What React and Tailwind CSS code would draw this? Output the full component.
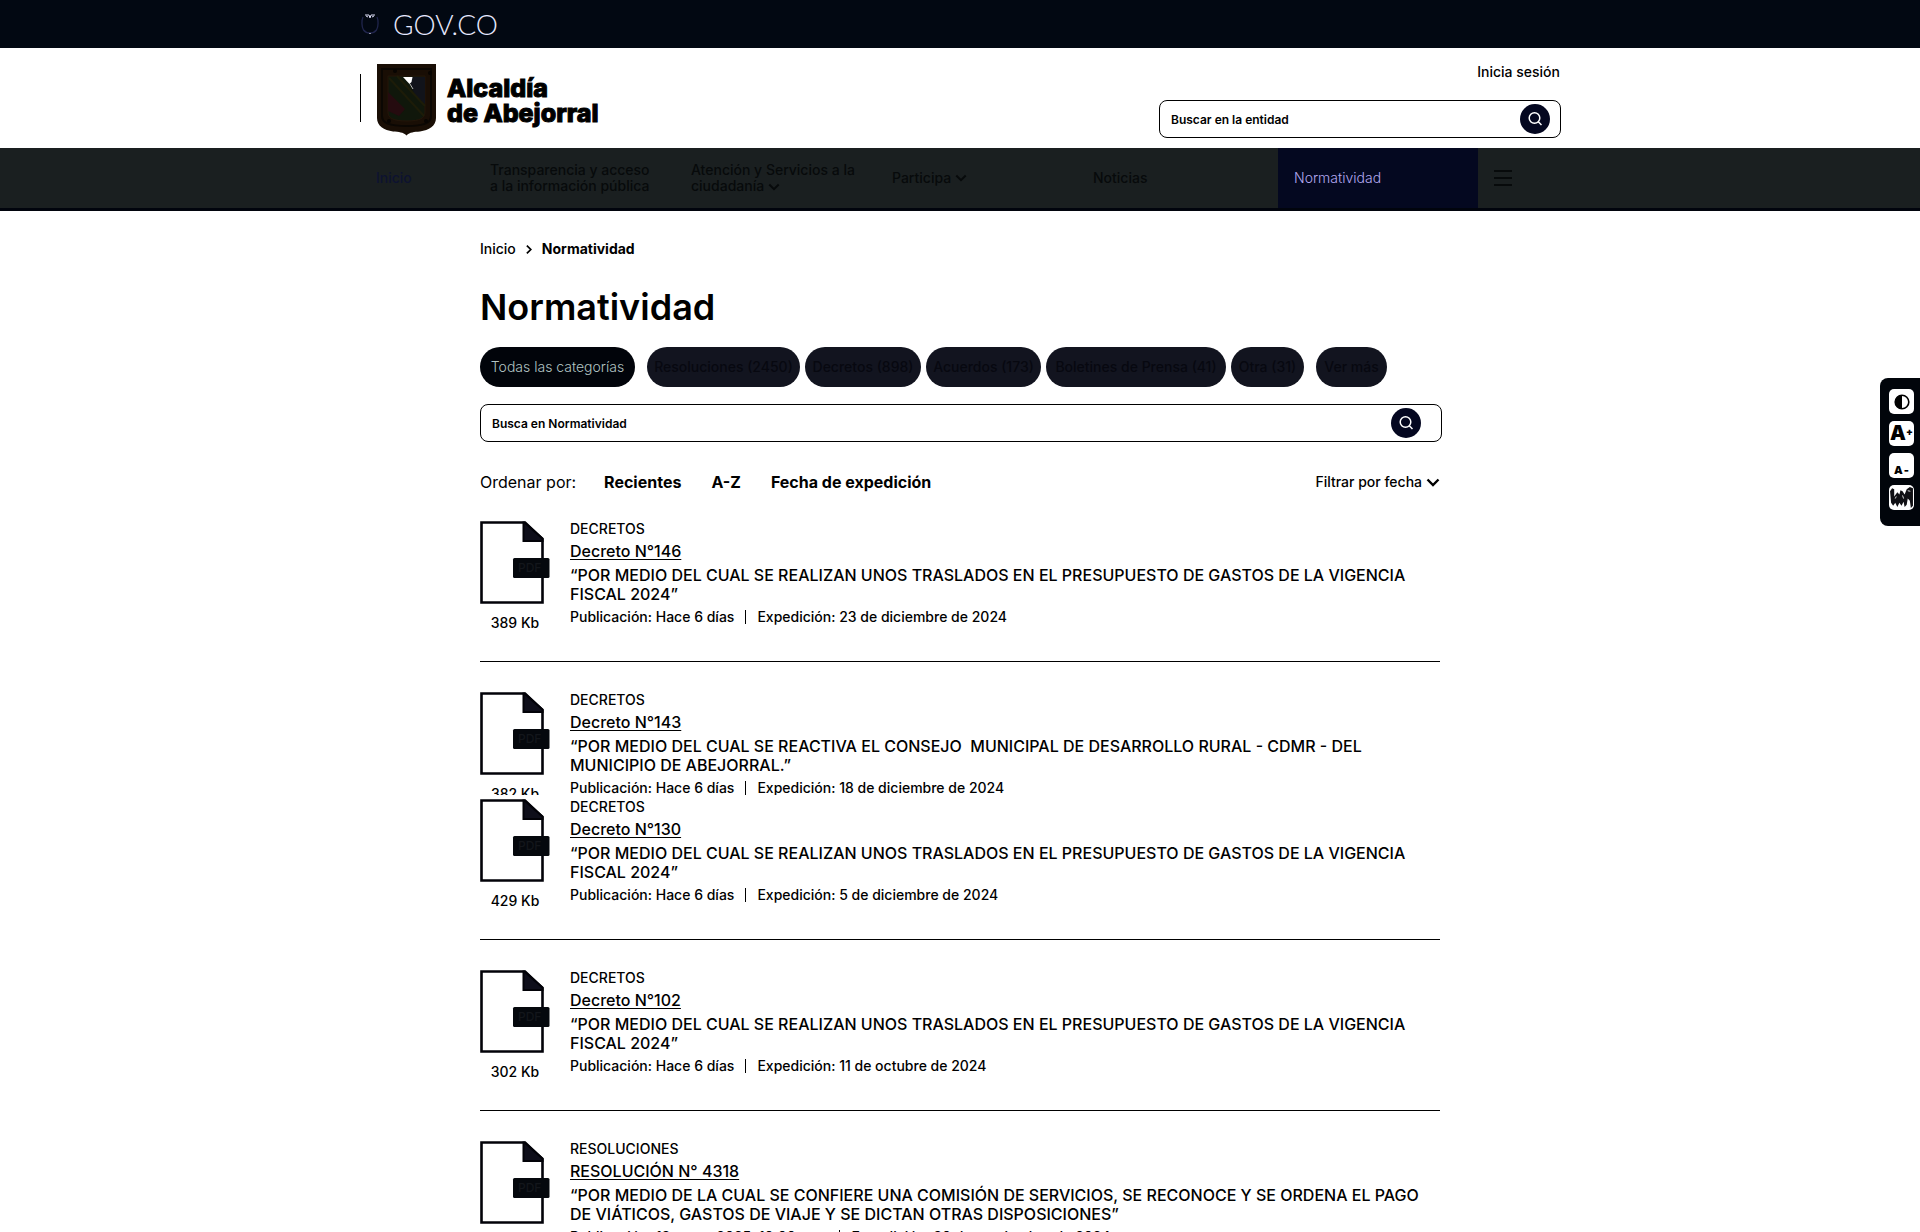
import React from "react";

const chips = [
  { label: "Resoluciones (2450)", width: "w-[153px]" },
  { label: "Decretos (898)", width: "w-[116px]" },
  { label: "Acuerdos (173)", width: "w-[115px]" },
  { label: "Boletines de Prensa (41)", width: "w-[180px]" },
  { label: "Otra (31)", width: "w-[73px]" },
];

const documents = [
  {
    category: "DECRETOS",
    title: "Decreto N°146",
    lines: ["“POR MEDIO DEL CUAL SE REALIZAN UNOS TRASLADOS EN EL PRESUPUESTO DE GASTOS DE LA VIGENCIA", "FISCAL 2024”"],
    published: "Publicación: Hace 6 días",
    issued: "Expedición: 23 de diciembre de 2024",
    size: "389 Kb",
  },
  {
    category: "DECRETOS",
    title: "Decreto N°143",
    lines: ["“POR MEDIO DEL CUAL SE REACTIVA EL CONSEJO\u00a0 MUNICIPAL DE DESARROLLO RURAL - CDMR - DEL", "MUNICIPIO DE ABEJORRAL.”"],
    published: "Publicación: Hace 6 días",
    issued: "Expedición: 18 de diciembre de 2024",
    size: "382 Kb",
    clipped: true,
  },
  {
    category: "DECRETOS",
    title: "Decreto N°130",
    lines: ["“POR MEDIO DEL CUAL SE REALIZAN UNOS TRASLADOS EN EL PRESUPUESTO DE GASTOS DE LA VIGENCIA", "FISCAL 2024”"],
    published: "Publicación: Hace 6 días",
    issued: "Expedición: 5 de diciembre de 2024",
    size: "429 Kb",
  },
  {
    category: "DECRETOS",
    title: "Decreto N°102",
    lines: ["“POR MEDIO DEL CUAL SE REALIZAN UNOS TRASLADOS EN EL PRESUPUESTO DE GASTOS DE LA VIGENCIA", "FISCAL 2024”"],
    published: "Publicación: Hace 6 días",
    issued: "Expedición: 11 de octubre de 2024",
    size: "302 Kb",
  },
  {
    category: "RESOLUCIONES",
    title: "RESOLUCIÓN N° 4318",
    lines: ["“POR MEDIO DE LA CUAL SE CONFIERE UNA COMISIÓN DE SERVICIOS, SE RECONOCE Y SE ORDENA EL PAGO", "DE VIÁTICOS, GASTOS DE VIAJE Y SE DICTAN OTRAS DISPOSICIONES”"],
    published: "Publicación: 13 enero 2025, 10:00 a.m.",
    issued: "Expedición: 30 de septiembre de 2024",
    size: "298 Kb",
  },
];

function Chevron({ className = "" }) {
  return (
    <svg viewBox="0 0 14 9" className={className} fill="none" stroke="currentColor" strokeWidth="2.4" aria-hidden="true">
      <path d="M1.5 1.5 7 7l5.500-5.500" />
    </svg>
  );
}

function SearchBox({ label, right }) {
  return (
    <form className="flex h-[38px] w-full items-center rounded-lg border border-black bg-white pl-[11px]" onSubmit={(e) => e.preventDefault()}>
      <input type="text" aria-label={label} placeholder={label} className="h-6 min-w-0 flex-1 bg-transparent text-xs font-semibold text-black outline-none placeholder:text-black placeholder:opacity-100" />
      <button type="submit" aria-label="Buscar" className={"flex size-[30px] shrink-0 items-center justify-center rounded-full bg-[#040720] " + right}>
        <svg viewBox="0 0 16 16" className="size-4" fill="none" stroke="white" strokeWidth="1.5" aria-hidden="true">
          <circle cx="7.500" cy="7" r="5.300" />
          <path d="m11.300 10.800 3.200 3.200" />
        </svg>
      </button>
    </form>
  );
}

function FileIcon() {
  return (
    <svg viewBox="0 0 70 84" className="h-[84px] w-[70px]" role="img" aria-label="PDF">
      <path d="M1.500 1.500H45L62.500 18V81.500H1.500Z" fill="white" stroke="#020208" strokeWidth="2.600" />
      <path d="M44.500 1.500 62.500 17.500V20H43.500V1.500Z" fill="#0e0e1a" stroke="#020208" strokeWidth="2" />
      <rect x="33" y="37" width="36.500" height="20" rx="1.500" fill="#05080d" />
      <text x="38" y="51" fontFamily="Inter, sans-serif" fontSize="12" fontWeight="500" fill="#13161b">PDF</text>
    </svg>
  );
}

function DocumentItem({ doc }) {
  return (
    <li className={doc.clipped ? "mb-1 h-[103px] overflow-hidden" : "mb-[30px] h-[141px] border-b border-black"}>
      <article className="flex">
        <div className="w-[90px] shrink-0">
          <FileIcon />
          <p className="mt-2 w-[70px] text-center text-sm leading-5 font-medium">{doc.size}</p>
        </div>
        <div className="min-w-0 flex-1">
          <p className="text-sm leading-4 font-medium">{doc.category}</p>
          <h2 className="mt-1 text-base leading-5 font-medium">
            <a href="#documento" className="underline underline-offset-2">{doc.title}</a>
          </h2>
          <p className="mt-[5px] text-base leading-[19px] font-medium whitespace-nowrap">
            {doc.lines[0]}
            <br />
            {doc.lines[1]}
          </p>
          <p className="mt-[3px] flex items-center text-sm leading-5 font-medium">
            <span>{doc.published}</span>
            <span className="mx-[11px] h-3.5 w-px bg-black" />
            <span>{doc.issued}</span>
          </p>
        </div>
      </article>
    </li>
  );
}

function TopBar() {
  return (
    <div className="h-12 bg-[#020812]">
      <div className="mx-auto flex h-full max-w-[1200px] items-center">
        <a href="#gov" className="flex items-center gap-[13px] pb-px">
          <svg viewBox="0 0 20 24" className="h-6 w-5" fill="none" aria-hidden="true">
            <path d="M3 5C1.500 8 1.500 15 3.500 18c1.500 2 3.500 3 6.500 3s5-1 6.500-3c2-3 2-10 .500-13" stroke="#20254c" strokeWidth="1.300" />
            <path d="M5 3h4l1 3 1-3h4M6 4l2 1M14 4l-2 1" stroke="#dcddf5" strokeWidth="1" />
            <path d="M10 21v1" stroke="white" strokeWidth="1" />
          </svg>
          <span className="font-[Lato] text-[28px] leading-8 font-light text-[#e7e9ff]">GOV.CO</span>
        </a>
      </div>
    </div>
  );
}

function Shield() {
  return (
    <svg viewBox="0 0 60 72" className="h-[72px] w-[60px]" aria-hidden="true">
      <path d="M0 0H59V54C59 62 52 66 43 67.500C37 68 33 68 29.500 71.500C26 68 22 68 16 67.500C7 66 0 62 0 54Z" fill="#190e05" />
      <path d="M5 5H54V52C54 59 47 62 30 62C12 62 5 59 5 52Z" fill="none" stroke="#0b0703" strokeWidth="2" />
      <path d="M11 12H48V48C48 54 43 57 30 57C16 57 11 54 11 48Z" fill="#10170b" stroke="#241509" strokeWidth="1" />
      <path d="M31 13H48V40L38 32Z" fill="#11131a" />
      <path d="M11 28 28 45 22 52 11 47Z" fill="#250b0f" />
      <path d="M12 14 47 52M20 12 48 42" stroke="#1d1c08" strokeWidth="2" />
      <circle cx="18" cy="7" r="2" fill="#080402" />
      <circle cx="53" cy="9" r="2" fill="#080402" />
      <circle cx="12" cy="57" r="2" fill="#080402" />
      <circle cx="49" cy="57" r="2" fill="#080402" />
      <path d="M26 13h9.500l-1 5-2 2Z" fill="white" />
      <path d="m33 20 3 5" stroke="#b5b5b5" strokeWidth="1" />
    </svg>
  );
}

function Header() {
  return (
    <header className="h-[100px]">
      <div className="mx-auto flex h-full max-w-[1202px] justify-between pl-px">
        <a href="#inicio" className="flex items-start pt-4">
          <span className="mt-[10px] mr-4 h-12 w-px bg-black" />
          <Shield />
          <span className="mt-3 ml-[10px] flex flex-col text-[25px] leading-[25px] font-extrabold text-black [-webkit-text-stroke:1px_black]">
            <span>Alcaldía</span>
            <span>de Abejorral</span>
          </span>
        </a>
        <div className="w-[402px] pt-[11px]">
          <div className="pr-px text-right">
            <a href="#sesion" className="inline-block text-sm leading-5 font-medium">Inicia sesión</a>
          </div>
          <div className="mt-[17px]">
            <SearchBox label="Buscar en la entidad" right="mr-[10px]" />
          </div>
        </div>
      </div>
    </header>
  );
}

function NavBar() {
  const item = "flex w-[201px] shrink-0 items-center px-4";
  return (
    <nav className="h-[63px] border-b-[3px] border-[#01040d] bg-[#1a1f20] text-sm leading-4 font-medium text-[#070a0b]">
      <div className="mx-auto flex h-full max-w-[1200px]">
        <a href="#inicio" className="flex w-[114px] shrink-0 items-center px-4 text-[#0d1230]">Inicio</a>
        <a href="#transparencia" className={item + " whitespace-nowrap"}>Transparencia y acceso<br />a la información pública</a>
        <a href="#atencion" className={item + " whitespace-nowrap"}>
          <span>Atención y Servicios a la<br />ciudadanía <Chevron className="inline h-2 w-3" /></span>
        </a>
        <a href="#participa" className={item + " gap-1"}>Participa <Chevron className="h-2 w-3" /></a>
        <a href="#noticias" className={item}>Noticias</a>
        <a href="#normatividad" aria-current="page" className="flex w-[200px] shrink-0 items-center bg-[#040820] px-4 font-light text-[#b4a8f0]">Normatividad</a>
        <button type="button" aria-label="Menú" className="ml-4 flex items-center">
          <svg viewBox="0 0 18 18" className="size-[18px]" stroke="currentColor" strokeWidth="2" aria-hidden="true">
            <path d="M0 2h18M0 9h18M0 16h18" />
          </svg>
        </button>
      </div>
    </nav>
  );
}

function AccessibilityBar() {
  const tile = "flex size-[25px] items-center justify-center rounded-[5px] bg-white text-black";
  return (
    <aside aria-label="Accesibilidad" className="fixed top-[378px] right-0 flex h-[148px] w-10 flex-col gap-[7px] rounded-l-lg bg-[#01050b] pt-[11px] pl-[9px]">
      <button type="button" aria-label="Contraste" className={tile}>
        <svg viewBox="0 0 16 16" className="size-4" aria-hidden="true">
          <circle cx="8" cy="8" r="6.800" fill="white" stroke="black" strokeWidth="1.600" />
          <path d="M8 1a7 7 0 0 0 0 14Z" />
        </svg>
      </button>
      <button type="button" aria-label="Aumentar texto" className={tile + " items-start"}>
        <span className="text-xl leading-6 font-black">A</span>
        <span className="mt-1 text-[10px] leading-3 font-black">+</span>
      </button>
      <button type="button" aria-label="Reducir texto" className={tile + " gap-px pt-2"}>
        <span className="text-[11px] leading-4 font-black">A</span>
        <span className="text-[11px] leading-4 font-black">-</span>
      </button>
      <button type="button" aria-label="Lengua de señas" className={tile}>
        <svg viewBox="0 0 24 24" className="size-[25px]" fill="#101014" aria-hidden="true">
          <path d="M1 6 3 3 5 4V11L8 7 10 9 11 5 13 6 15 9 17 4 20 2 23 3V20L21 22 20 15 18 13 17 19 15 21 14 16 12 20 10 17 8 21 6 17 4 20 2 17Z" />
          <path d="M18 5.500 20.500 6M6 13l1-2M13 10l1 3" stroke="white" strokeWidth="0.800" />
        </svg>
      </button>
    </aside>
  );
}

export default function App() {
  const chip = "flex h-10 shrink-0 items-center justify-center rounded-full text-sm whitespace-nowrap ";
  return (
    <div className="h-screen overflow-hidden bg-white font-[Inter,sans-serif] text-black">
      <TopBar />
      <Header />
      <NavBar />
      <main className="mx-auto max-w-[960px]">
        <nav aria-label="Ruta" className="flex items-center pt-7 text-sm leading-5">
          <a href="#inicio" className="font-medium">Inicio</a>
          <Chevron className="mx-2 h-[7px] w-[10px] -rotate-90" />
          <span className="text-sm font-bold">Normatividad</span>
        </nav>
        <h1 className="mt-6 text-4xl leading-[48px] font-semibold">Normatividad</h1>
        <div className="mt-4 flex">
          <button type="button" className={chip + "mr-3 w-[155px] bg-[#01040a] font-light text-[#b3c4c4]"}>Todas las categorías</button>
          <div className="mr-3 flex gap-[5px]">
            {chips.map((c) => (
              <button key={c.label} type="button" className={chip + c.width + " bg-[#12141f] font-medium text-[#070810]"}>{c.label}</button>
            ))}
          </div>
          <button type="button" className={chip + "w-[71px] bg-[#12141f] font-medium text-[#070810]"}>Ver más</button>
        </div>
        <div className="mt-[17px] -mr-[2px]">
          <SearchBox label="Busca en Normatividad" right="mr-[20px]" />
        </div>
        <div className="mt-7 flex items-center text-base leading-6">
          <span>Ordenar por:</span>
          <button type="button" className="ml-7 font-bold">Recientes</button>
          <button type="button" className="ml-[30px] font-bold">A-Z</button>
          <button type="button" className="ml-[30px] font-bold">Fecha de expedición</button>
          <button type="button" className="ml-auto flex items-center gap-1 text-sm font-medium">
            Filtrar por fecha <Chevron className="h-[9px] w-[14px]" />
          </button>
        </div>
        <ul className="mt-[27px]">
          {documents.map((doc) => (
            <DocumentItem key={doc.title} doc={doc} />
          ))}
        </ul>
      </main>
      <AccessibilityBar />
    </div>
  );
}
